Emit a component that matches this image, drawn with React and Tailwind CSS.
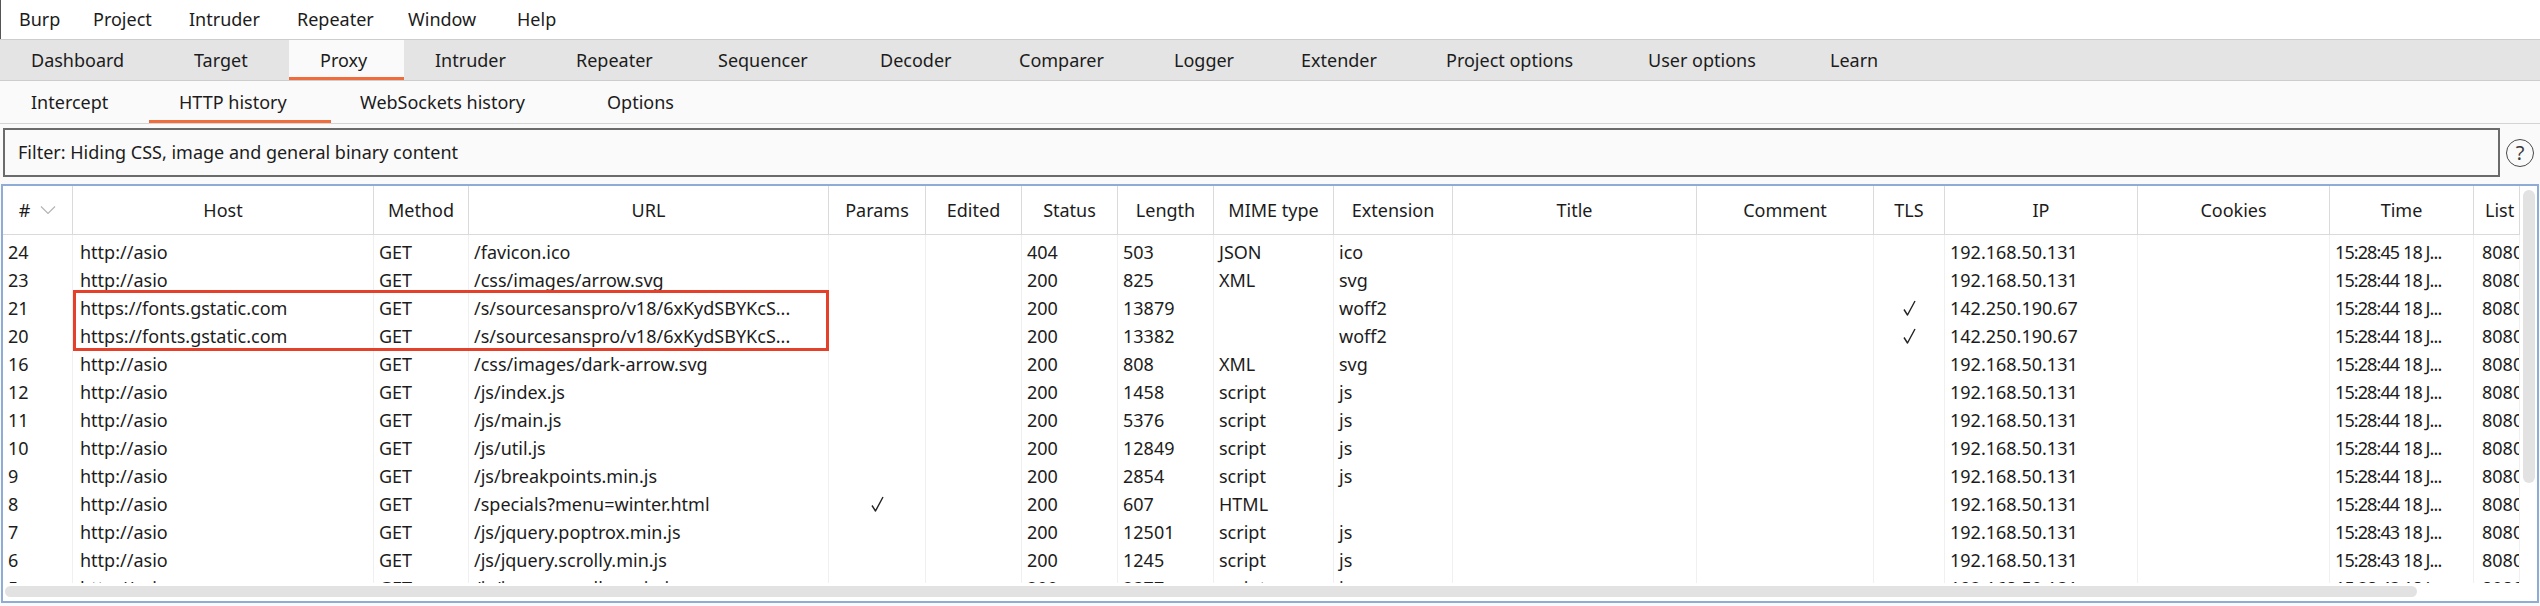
import React from 'react';

const menu = [
    { label: 'Burp', w: 'w-[74px]' },
    { label: 'Project', w: 'w-[96px]' },
    { label: 'Intruder', w: 'w-[108px]' },
    { label: 'Repeater', w: 'w-[111px]' },
    { label: 'Window', w: 'w-[109px]' },
    { label: 'Help', w: 'w-[60px]' },
];

const tabs = [
    { label: 'Dashboard', w: 'w-[163px]' },
    { label: 'Target', w: 'w-[126px]' },
    { label: 'Proxy', w: 'w-[115px]', active: true },
    { label: 'Intruder', w: 'w-[141px]' },
    { label: 'Repeater', w: 'w-[142px]' },
    { label: 'Sequencer', w: 'w-[162px]' },
    { label: 'Decoder', w: 'w-[139px]' },
    { label: 'Comparer', w: 'w-[155px]' },
    { label: 'Logger', w: 'w-[127px]' },
    { label: 'Extender', w: 'w-[145px]' },
    { label: 'Project options', w: 'w-[202px]' },
    { label: 'User options', w: 'w-[182px]' },
    { label: 'Learn', w: 'w-[120px]' },
];

const subTabs = [
    { label: 'Intercept', w: 'w-[149px]', pl: 'pl-[31px]' },
    { label: 'HTTP history', w: 'w-[182px]', pl: 'pl-[30px]', active: true },
    { label: 'WebSockets history', w: 'w-[247px]', pl: 'pl-[29px]' },
    { label: 'Options', w: 'w-[120px]', pl: 'pl-[29px]' },
];

// column widths, in px, written out so tailwind picks them up
const cols = [
    'w-[70px]', 'w-[301px]', 'w-[95px]', 'w-[360px]', 'w-[97px]', 'w-[96px]',
    'w-[96px]', 'w-[96px]', 'w-[120px]', 'w-[119px]', 'w-[244px]', 'w-[177px]',
    'w-[71px]', 'w-[193px]', 'w-[192px]', 'w-[144px]', 'w-[46px]',
];

// per column cell padding / tweaks
const cellPad = (i) => {
    if (i === 1) return 'pl-[7px]';
    if (i === 15) return 'pl-[5px] tracking-[-0.9px]';
    if (i === 16) return 'pl-[8px]';
    return 'pl-[5px]';
};

const headers = ['#', 'Host', 'Method', 'URL', 'Params', 'Edited', 'Status', 'Length', 'MIME type', 'Extension', 'Title', 'Comment', 'TLS', 'IP', 'Cookies', 'Time', 'List'];

const local = '192.168.50.131';
const google = '142.250.190.67';

const rows = [
    ['24', 'http://asio', 'GET', '/favicon.ico', '', '', '404', '503', 'JSON', 'ico', '', '', '', local, '', '15:28:45 18 J...', '8080'],
    ['23', 'http://asio', 'GET', '/css/images/arrow.svg', '', '', '200', '825', 'XML', 'svg', '', '', '', local, '', '15:28:44 18 J...', '8080'],
    ['21', 'https://fonts.gstatic.com', 'GET', '/s/sourcesanspro/v18/6xKydSBYKcS...', '', '', '200', '13879', '', 'woff2', '', '', 'check', google, '', '15:28:44 18 J...', '8080'],
    ['20', 'https://fonts.gstatic.com', 'GET', '/s/sourcesanspro/v18/6xKydSBYKcS...', '', '', '200', '13382', '', 'woff2', '', '', 'check', google, '', '15:28:44 18 J...', '8080'],
    ['16', 'http://asio', 'GET', '/css/images/dark-arrow.svg', '', '', '200', '808', 'XML', 'svg', '', '', '', local, '', '15:28:44 18 J...', '8080'],
    ['12', 'http://asio', 'GET', '/js/index.js', '', '', '200', '1458', 'script', 'js', '', '', '', local, '', '15:28:44 18 J...', '8080'],
    ['11', 'http://asio', 'GET', '/js/main.js', '', '', '200', '5376', 'script', 'js', '', '', '', local, '', '15:28:44 18 J...', '8080'],
    ['10', 'http://asio', 'GET', '/js/util.js', '', '', '200', '12849', 'script', 'js', '', '', '', local, '', '15:28:44 18 J...', '8080'],
    ['9', 'http://asio', 'GET', '/js/breakpoints.min.js', '', '', '200', '2854', 'script', 'js', '', '', '', local, '', '15:28:44 18 J...', '8080'],
    ['8', 'http://asio', 'GET', '/specials?menu=winter.html', 'check', '', '200', '607', 'HTML', '', '', '', '', local, '', '15:28:44 18 J...', '8080'],
    ['7', 'http://asio', 'GET', '/js/jquery.poptrox.min.js', '', '', '200', '12501', 'script', 'js', '', '', '', local, '', '15:28:43 18 J...', '8080'],
    ['6', 'http://asio', 'GET', '/js/jquery.scrolly.min.js', '', '', '200', '1245', 'script', 'js', '', '', '', local, '', '15:28:43 18 J...', '8080'],
    ['5', 'http://asio', 'GET', '/js/jquery.scrollex.min.js', '', '', '200', '2377', 'script', 'js', '', '', '', local, '', '15:28:43 18 J...', '8080'],
];

const Check = () => (
    <div className="flex h-full w-full items-center justify-center pr-[4px]">
        <svg width="13" height="16" viewBox="0 0 13 16">
            <polyline points="1,9.5 4.5,15 12,1" fill="none" stroke="#222" strokeWidth="1.4" strokeLinejoin="round" />
        </svg>
    </div>
);

const SortChevron = () => (
    <svg width="16" height="10" viewBox="0 0 16 10" className="ml-[10px]">
        <polyline points="1,1.5 8,8.5 15,1.5" fill="none" stroke="#b4b4b4" strokeWidth="1.2" />
    </svg>
);

const HelpIcon = () => (
    <div className="flex h-[28px] w-[28px] items-center justify-center rounded-full border-[1.5px] border-[#4a4a4a] text-[20px] leading-none text-[#3a3a3a]">
        ?
    </div>
);

const Row = ({ cells }) => (
    <div className="flex h-[28px]">
        {cells.map((c, i) => (
            <div
                key={i}
                className={`${cols[i]} ${cellPad(i)} shrink-0 overflow-hidden whitespace-nowrap border-r border-[#f0f0f0] leading-[28px]`}
            >
                {c === 'check' ? <Check /> : c}
            </div>
        ))}
    </div>
);

const App = () => {
    return (
        <div className="h-[606px] w-[2540px] overflow-hidden bg-[#fafafa] font-['Noto_Sans',sans-serif] text-[18px] text-[#1c1c1c]">
            {/* menu bar */}
            <div className="flex h-[39px] items-center border-l border-[#555] bg-white pl-[18px]">
                {menu.map((m) => (
                    <div key={m.label} className={`${m.w} shrink-0`}>{m.label}</div>
                ))}
            </div>

            {/* main tabs */}
            <div className="flex h-[42px] border-y border-[#cdcdcd] bg-[#e4e4e4]">
                {tabs.map((t) => (
                    <div
                        key={t.label}
                        className={`${t.w} flex shrink-0 items-center pl-[31px] ${t.active ? 'border-b-[3px] border-[#ef6c3c] bg-[#fafafa] pt-[3px]' : ''}`}
                    >
                        {t.label}
                    </div>
                ))}
            </div>

            {/* proxy sub tabs */}
            <div className="flex h-[43px] border-b border-[#d4d4d4] bg-[#fafafa]">
                {subTabs.map((t) => (
                    <div
                        key={t.label}
                        className={`${t.w} ${t.pl} flex shrink-0 items-center ${t.active ? 'border-b-[3px] border-[#ef6c3c] pt-[3px]' : ''}`}
                    >
                        {t.label}
                    </div>
                ))}
            </div>

            {/* filter */}
            <div className="mt-[4px] flex items-center">
                <div className="ml-[3px] flex h-[49px] w-[2497px] items-center border-2 border-[#6b6b6b] bg-[#fafafa] pl-[13px]">
                    Filter: Hiding CSS, image and general binary content
                </div>
                <div className="flex flex-1 justify-center">
                    <HelpIcon />
                </div>
            </div>

            {/* history table */}
            <div className="ml-px mt-[7px] flex h-[419px] w-[2538px] flex-col border-2 border-[#8eacd6] bg-white">
                <div className="flex h-[397px]">
                    <div className="w-[2517px] shrink-0 overflow-hidden">
                        <div className="flex h-[49px] border-b border-[#dadada]">
                            {headers.map((h, i) => (
                                <div
                                    key={h}
                                    className={`${cols[i]} flex shrink-0 items-center overflow-hidden whitespace-nowrap border-r border-[#dadada] ${i === 16 ? 'pl-[11px]' : 'justify-center'}`}
                                >
                                    {h}
                                    {i === 0 && <SortChevron />}
                                </div>
                            ))}
                        </div>
                        <div className="relative h-[348px] overflow-hidden">
                            <Row cells={Array(17).fill('')} />
                            <div className="absolute left-0 top-[3px]">
                                {rows.map((r) => (
                                    <Row key={r[0]} cells={r} />
                                ))}
                            </div>
                            <div className="absolute left-[70px] top-[55px] h-[61px] w-[756px] border-[3px] border-[#e5402a]" />
                        </div>
                    </div>
                    <div className="w-[17px] shrink-0 bg-white pl-[3px] pt-[4px]">
                        <div className="h-[293px] w-[12px] rounded-full bg-[#e2e2e2]" />
                    </div>
                </div>
                <div className="flex h-[18px] bg-white pt-[3px]">
                    <div className="ml-[2px] h-[11px] w-[2412px] rounded-full bg-[#e2e2e2]" />
                </div>
            </div>
        </div>
    );
};

export default App;
